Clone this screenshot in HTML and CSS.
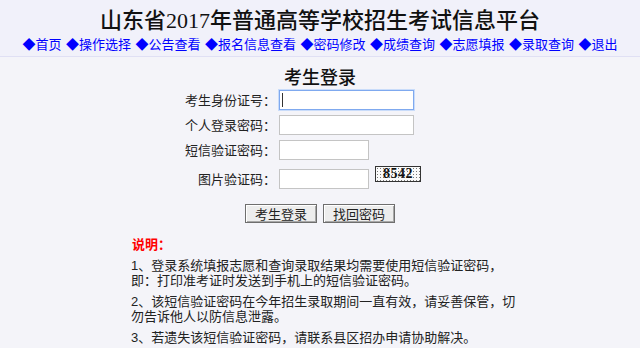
FILE: index.html
```html
<!DOCTYPE html>
<html lang="zh-CN">
<head>
<meta charset="utf-8">
<title>山东省2017年普通高等学校招生考试信息平台</title>
<link rel="stylesheet" href="styles.css">
</head>
<body>
<div class="header">
  <h1 class="site-title">山东省2017年普通高等学校招生考试信息平台</h1>
  <div class="nav">
    <a href="#">◆首页</a>
    <a href="#">◆操作选择</a>
    <a href="#">◆公告查看</a>
    <a href="#">◆报名信息查看</a>
    <a href="#">◆密码修改</a>
    <a href="#">◆成绩查询</a>
    <a href="#">◆志愿填报</a>
    <a href="#">◆录取查询</a>
    <a href="#">◆退出</a>
  </div>
</div>
<div class="main">
  <h2 class="login-title">考生登录</h2>
  <div class="form">
    <label class="label">考生身份证号：</label>
    <div class="field"><span class="focus-wrap"><input class="input wide focused" type="text"></span></div>
    <label class="label">个人登录密码：</label>
    <div class="field"><input class="input wide" type="password"></div>
    <label class="label">短信验证密码：</label>
    <div class="field"><input class="input narrow" type="password"></div>
    <label class="label row-last">图片验证码：</label>
    <div class="field row-last"><input class="input narrow" type="text"><span class="captcha">8542</span></div>
  </div>
  <div class="buttons">
    <button class="btn" type="button">考生登录</button>
    <button class="btn" type="button">找回密码</button>
  </div>
  <div class="notes">
    <div class="notes-title">说明：</div>
    <p>1、登录系统填报志愿和查询录取结果均需要使用短信验证密码，<br>即：打印准考证时发送到手机上的短信验证密码。</p>
    <p>2、该短信验证密码在今年招生录取期间一直有效，请妥善保管，切勿告诉他人以防信息泄露。</p>
    <p>3、若遗失该短信验证密码，请联系县区招办申请协助解决。</p>
  </div>
</div>
</body>
</html>
```
FILE: styles.css
```css
html, body {
  margin: 0;
  padding: 0;
}
body {
  background: #f4f4f9;
  font-family: "Liberation Sans", "Noto Sans CJK SC", sans-serif;
  font-size: 13px;
  color: #222;
  width: 640px;
  height: 348px;
  overflow: hidden;
}
.header {
  background: #f1f1fa;
  border-bottom: 1px solid #e0e0f4;
  height: 57px;
  padding-top: 7px;
  box-sizing: border-box;
}
.site-title {
  margin: 0;
  text-align: center;
  font-family: "Liberation Serif", "Noto Sans CJK SC", serif;
  font-size: 22px;
  line-height: 28px;
  font-weight: 500;
  color: #111;
}
.nav {
  display: flex;
  justify-content: center;
  gap: 4.5px;
  line-height: 18px;
  font-family: "Noto Sans CJK SC", sans-serif;
  font-size: 13px;
}
.nav a {
  color: #0000ff;
  text-decoration: none;
}
.main {
  padding-top: 8px;
}
.login-title {
  margin: 0;
  text-align: center;
  font-family: "Noto Sans CJK SC", serif;
  font-size: 18px;
  line-height: 22px;
  font-weight: 500;
  color: #111;
}
.form {
  display: grid;
  grid-template-columns: 100px auto;
  column-gap: 3px;
  row-gap: 5px;
  margin: 3px 0 0 176px;
  justify-content: start;
}
.label {
  text-align: right;
  line-height: 20px;
  height: 20px;
  font-family: "Noto Sans CJK SC", sans-serif;
  color: #222;
}
.row-last {
  margin-top: 4px;
}
.field {
  display: flex;
  align-items: flex-start;
  gap: 6px;
  height: 20px;
}
.input {
  box-sizing: border-box;
  height: 20px;
  margin: 0;
  padding: 0 3px;
  border: 1px solid #c4c4c4;
  background: #fff;
  font-size: 13px;
  outline: none;
}
.wide {
  width: 135px;
}
.narrow {
  width: 90px;
}
.focused {
  border-color: #7fa9ef;
  box-shadow: 0 0 0 1px #c9dcfa;
}
.focus-wrap {
  position: relative;
  display: block;
  height: 20px;
}
.focus-wrap::after {
  content: "";
  position: absolute;
  left: 3px;
  top: 3px;
  width: 1px;
  height: 14px;
  background: #333;
}
.captcha {
  box-sizing: border-box;
  width: 46px;
  height: 16px;
  margin-top: -3px;
  border: 1px solid #333;
  background-color: #fafafa;
  background-image: radial-gradient(circle, #777 0.6px, transparent 0.8px);
  background-size: 3px 3px;
  font-family: "Liberation Serif", serif;
  font-weight: bold;
  font-size: 14px;
  line-height: 14px;
  text-align: center;
  letter-spacing: 0.5px;
  color: #111;
}
.buttons {
  display: flex;
  justify-content: center;
  gap: 6px;
  margin-top: 15px;
}
.btn {
  box-sizing: border-box;
  width: 72px;
  height: 19px;
  padding: 0;
  margin: 0;
  border: 1px solid #6e6e6e;
  background: #ededed;
  box-shadow: inset 1px 1px 0 #fff, inset -1px -1px 0 #a8a8a8;
  font-family: "Noto Sans CJK SC", sans-serif;
  font-size: 13px;
  line-height: 17px;
  color: #222;
}
.notes {
  width: 390px;
  margin: 15px 0 0 131px;
  font-family: "Liberation Sans", "Noto Sans CJK SC", sans-serif;
  line-height: 15px;
}
.notes-title {
  color: #ff0000;
  font-weight: bold;
  line-height: 14px;
  padding-left: 1px;
  margin-bottom: 6px;
}
.notes p {
  margin: 0 0 6px 0;
  color: #222;
}
```
